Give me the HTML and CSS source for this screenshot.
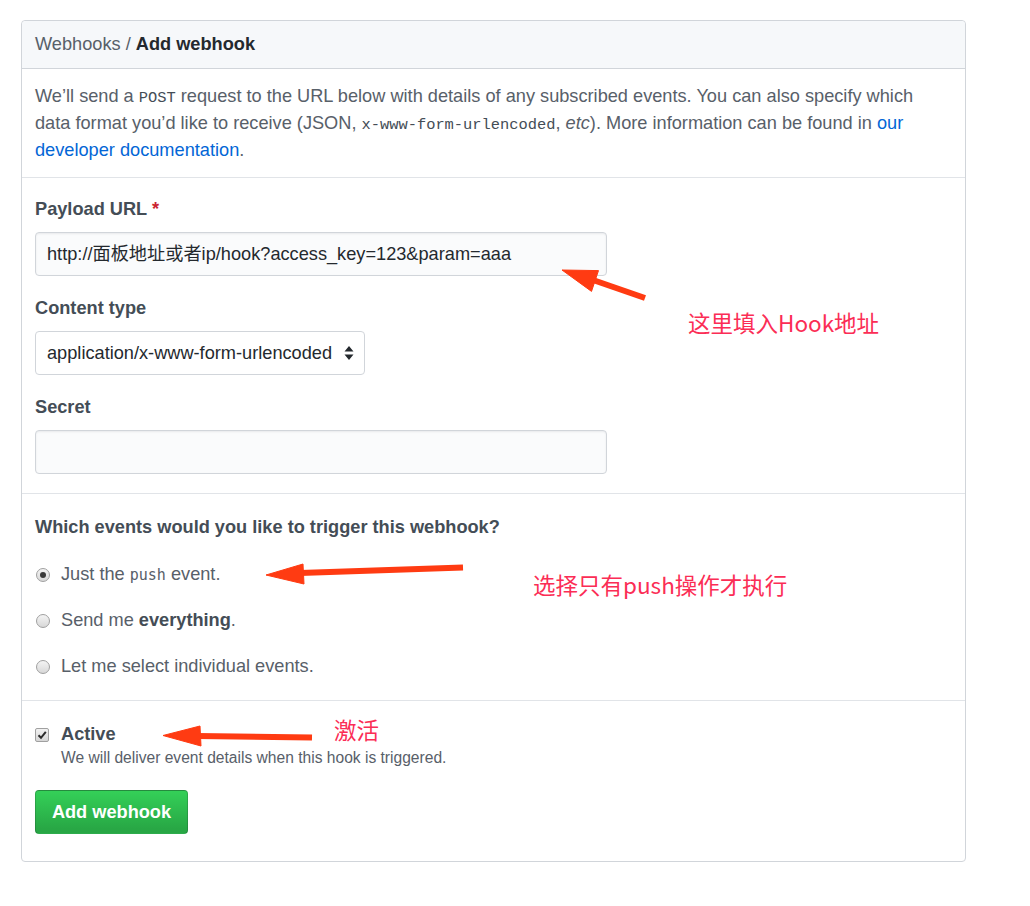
FILE: index.html
```html
<!DOCTYPE html>
<html>
<head>
<meta charset="utf-8">
<link rel="stylesheet" href="styles.css">
</head>
<body>
<div class="page">
  <div class="box">
    <div class="box-header"><span class="crumb">Webhooks /</span> <strong>Add webhook</strong></div>
    <div class="section intro">
      <p>We’ll send a <code>POST</code> request to the URL below with details of any subscribed events. You can also specify which data format you’d like to receive (JSON, <code>x-www-form-urlencoded</code>, <em>etc</em>). More information can be found in <a href="#">our developer documentation</a>.</p>
    </div>
    <div class="section fields">
      <div class="group">
        <label class="label">Payload URL <span class="req">*</span></label>
        <div class="input wide">http://面板地址或者ip/hook?access_key=123&amp;param=aaa</div>
      </div>
      <div class="group">
        <label class="label">Content type</label>
        <div class="input select">
          <span>application/x-www-form-urlencoded</span>
          <svg class="caret" width="10" height="16" viewBox="0 0 10 16"><path d="M5 1 L9.5 6.5 H0.5 Z M5 15 L9.5 9.5 H0.5 Z" fill="#24292e"/></svg>
        </div>
      </div>
      <div class="group">
        <label class="label">Secret</label>
        <div class="input wide"></div>
      </div>
    </div>
    <div class="section events">
      <div class="label heading">Which events would you like to trigger this webhook?</div>
      <div class="radios">
        <div class="radio-row"><span class="radio checked"></span><span>Just the <code class="push">push</code> event.</span></div>
        <div class="radio-row"><span class="radio"></span><span>Send me <strong>everything</strong>.</span></div>
        <div class="radio-row"><span class="radio"></span><span>Let me select individual events.</span></div>
      </div>
    </div>
    <div class="section active">
      <div class="check-row">
        <span class="checkbox"><svg width="10" height="10" viewBox="0 0 10 10"><path d="M1.5 5.2 L4 7.8 L8.8 1.8" fill="none" stroke="#2b2b2b" stroke-width="2"/></svg></span>
        <div>
          <div class="label">Active</div>
          <div class="note">We will deliver event details when this hook is triggered.</div>
        </div>
      </div>
      <button class="btn">Add webhook</button>
    </div>
  </div>
</div>

<svg class="overlay" width="1030" height="906" viewBox="0 0 1030 906">
  <g fill="#ff3b12" stroke="#ff3b12">
    <line x1="645" y1="298" x2="593" y2="280" stroke-width="6"/>
    <polygon points="562,270 598.5,270.6 591.5,291.4" stroke-width="1"/>
    <line x1="463" y1="567.5" x2="300" y2="573" stroke-width="6"/>
    <polygon points="266,575 303,564 304,584" stroke-width="1"/>
    <line x1="312" y1="737.5" x2="197" y2="736" stroke-width="6"/>
    <polygon points="163,735.5 200,726 201,746" stroke-width="1"/>
  </g>
</svg>
<div class="note-tag tag1">这里填入Hook地址</div>
<div class="note-tag tag2">选择只有push操作才执行</div>
<div class="note-tag tag3">激活</div>
</body>
</html>
```

FILE: styles.css
```css
html, body {
  margin: 0;
  padding: 0;
  background: #fff;
}
body {
  font-family: "Liberation Sans", Arial, "Noto Sans CJK SC", sans-serif;
  font-size: 18.2px;
  line-height: 27px;
  color: #586069;
  width: 1030px;
  height: 906px;
  position: relative;
  overflow: hidden;
}
.page {
  padding: 20px 0 0 21px;
}
.box {
  width: 943px;
  border: 1px solid #d1d5da;
  border-radius: 4px;
}
.box-header {
  height: 47px;
  line-height: 47px;
  padding-left: 13px;
  background: #f6f8fa;
  border-bottom: 1px solid #d1d5da;
  border-radius: 4px 4px 0 0;
  color: #586069;
}
.box-header strong {
  color: #24292e;
}
.section {
  padding: 0 13px;
  border-bottom: 1px solid #e1e4e8;
}
.section:last-child {
  border-bottom: none;
}
.intro {
  padding-top: 14px;
  padding-bottom: 13px;
}
.intro p {
  margin: 0;
  padding-right: 14px;
}
code {
  font-family: "Liberation Mono", "DejaVu Sans Mono", monospace;
  font-size: 15.4px;
  line-height: 1;
  color: #444d56;
}
a {
  color: #0366d6;
  text-decoration: none;
}
.fields {
  padding-top: 18px;
  padding-bottom: 19px;
}
.group {
  margin-bottom: 19px;
}
.group:last-child {
  margin-bottom: 0;
}
.label {
  display: block;
  font-weight: bold;
  color: #444d56;
  margin-bottom: 9px;
}
.req {
  color: #cb2431;
}
.input {
  box-sizing: border-box;
  height: 44px;
  border: 1px solid #d1d5da;
  border-radius: 4px;
  background: #fafbfc;
  color: #24292e;
  padding: 0 11px;
  line-height: 42px;
  font-family: "Liberation Sans", Arial, "Noto Sans CJK SC", sans-serif;
  white-space: nowrap;
  box-shadow: inset 0 1px 2px rgba(27,31,35,0.075);
}
.wide {
  width: 572px;
}
.select {
  width: 330px;
  background: #fff;
  display: flex;
  align-items: center;
  justify-content: space-between;
  padding-right: 10px;
  box-shadow: none;
}
.caret {
  display: block;
}
.events {
  padding-top: 20px;
  padding-bottom: 20px;
}
.heading {
  margin-bottom: 20px;
}
.radios {
  display: flex;
  flex-direction: column;
  gap: 19px;
}
.radio-row {
  display: flex;
  align-items: center;
  gap: 11px;
  padding-left: 1px;
}
.radio-row strong {
  color: #444d56;
}
.radio {
  box-sizing: border-box;
  width: 14px;
  height: 14px;
  border-radius: 50%;
  border: 1px solid #a0a0a0;
  background: linear-gradient(#f4f4f4, #d8d8d8);
  position: relative;
  flex: none;
}
.radio.checked::after {
  content: "";
  position: absolute;
  left: 3px;
  top: 3px;
  width: 6px;
  height: 6px;
  border-radius: 50%;
  background: #3a3a3a;
}
.push {
  font-family: "DejaVu Sans Mono", monospace;
  font-size: 15px;
  color: #586069;
}
.active {
  padding-top: 20px;
  padding-bottom: 27px;
}
.check-row {
  display: flex;
  align-items: flex-start;
  gap: 12px;
}
.check-row .label {
  margin-bottom: 0;
}
.checkbox {
  box-sizing: border-box;
  width: 14px;
  height: 14px;
  margin-top: 7px;
  border: 1px solid #a0a0a0;
  border-radius: 2px;
  background: linear-gradient(#f2f2f2, #d6d6d6);
  display: flex;
  align-items: center;
  justify-content: center;
  flex: none;
}
.note {
  font-size: 15.6px;
  line-height: 20px;
  color: #586069;
}
.btn {
  display: block;
  margin-top: 22px;
  box-sizing: border-box;
  width: 153px;
  height: 44px;
  border: 1px solid rgba(27,31,35,0.2);
  border-radius: 4px;
  background: linear-gradient(#34d058, #28a745 90%);
  color: #fff;
  font-family: "Liberation Sans", Arial, sans-serif;
  font-size: 18.2px;
  font-weight: bold;
  padding: 0;
}
.overlay {
  position: absolute;
  left: 0;
  top: 0;
  pointer-events: none;
}
.note-tag {
  position: absolute;
  font-family: "Noto Sans CJK SC", "Noto Sans", sans-serif;
  font-size: 22.5px;
  line-height: 30px;
  color: #fb2d55;
  white-space: nowrap;
}
.tag1 { left: 688px; top: 307px; }
.tag2 { left: 533px; top: 569px; }
.tag3 { left: 334px; top: 714px; }
```
